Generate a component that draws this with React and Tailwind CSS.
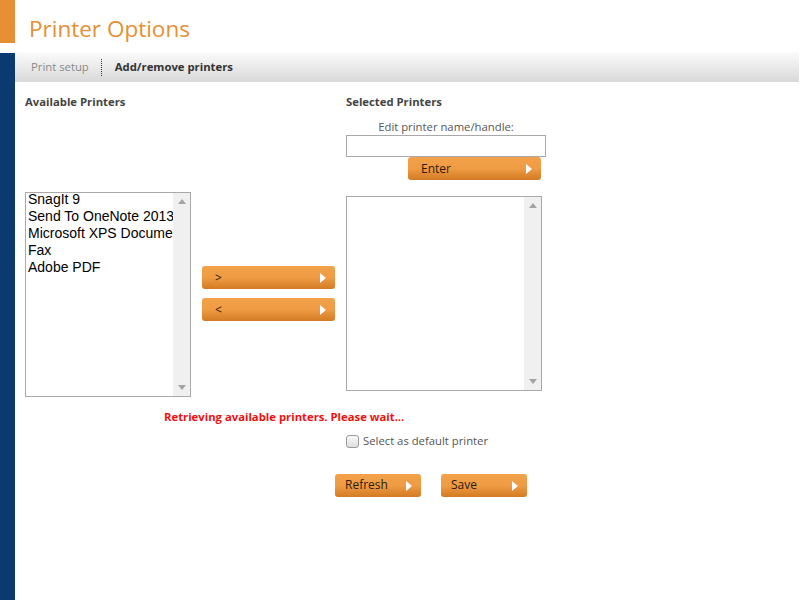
import React from 'react'

const font = { fontFamily: '"Open Sans", "Noto Sans", sans-serif' }

// orange gradient button with the little white arrow on the right
function OrangeButton({ label, className = '', small = false }) {
    return (
        <button
            className={`relative flex h-[23px] items-center rounded-[3px] bg-gradient-to-b from-[#f2a14a] via-[#ef9c44] to-[#d27b22] text-[12px] text-[#2a1a0a] ${small ? 'pl-[10px]' : 'pl-[13px]'} ${className}`}
        >
            <span>{label}</span>
            <svg className="absolute right-[9px] top-[7px]" width="6" height="10" viewBox="0 0 6 10">
                <path d="M0 0 L6 5 L0 10 Z" fill="#fff" />
            </svg>
        </button>
    )
}

function ListBox({ items = [], className = '' }) {
    return (
        <div className={`flex border border-[#a9a9a9] bg-white ${className}`}>
            <div className="-mt-[2px] flex-1 overflow-hidden whitespace-nowrap pl-[2px] text-[14px] leading-[17px] text-black" style={{ fontFamily: '"Liberation Sans", Arial, sans-serif' }}>
                {items.map((it) => (
                    <div key={it}>{it}</div>
                ))}
            </div>
            <div className="flex w-[17px] flex-col items-center justify-between bg-[#f0f0f0] py-[6px]">
                <svg width="8" height="5" viewBox="0 0 8 5">
                    <path d="M0 5 L4 0 L8 5 Z" fill="#a3a3a3" />
                </svg>
                <svg width="8" height="5" viewBox="0 0 8 5">
                    <path d="M0 0 L4 5 L8 0 Z" fill="#a3a3a3" />
                </svg>
            </div>
        </div>
    )
}

export default function App() {
    const printers = ['SnagIt 9', 'Send To OneNote 2013', 'Microsoft XPS Document Writer', 'Fax', 'Adobe PDF']

    return (
        <div className="flex h-[600px] w-[800px] bg-white" style={font}>
            <div className="flex w-[15px] flex-col">
                <div className="h-[43px] bg-[#e68f34]" />
                <div className="h-[10px]" />
                <div className="flex-1 bg-[#0a3a70]" />
            </div>

            <div className="flex flex-1 flex-col">
                <div className="h-[52px] pl-[14px] pt-[13px] text-[22.5px] leading-[32px] text-[#e68f34]">Printer Options</div>

                <div className="flex h-[30px] w-[784px] items-center bg-gradient-to-b from-[#fbfbfb] to-[#d9d9d9] text-[11.3px]">
                    <span className="pl-[16px] text-[#8a8a8a]">Print setup</span>
                    <span className="ml-[12px] h-[17px] border-l border-dotted border-[#333]" />
                    <span className="ml-[13px] font-bold text-[#333]">Add/remove printers</span>
                </div>

                <div className="flex pl-[10px] pt-[12px]">
                    <div className="flex w-[166px] flex-col">
                        <div className="text-[11.3px] font-bold leading-[16px] text-[#444]">Available Printers</div>
                        <ListBox items={printers} className="mt-[82px] h-[205px]" />
                    </div>

                    <div className="ml-[11px] flex w-[133px] flex-col gap-[9px] pt-[172px]">
                        <OrangeButton label=">" className="w-[133px]" />
                        <OrangeButton label="<" className="w-[133px]" />
                    </div>

                    <div className="ml-[11px] flex w-[200px] flex-col">
                        <div className="text-[11.3px] font-bold leading-[16px] text-[#444]">Selected Printers</div>
                        <div className="mt-[10px] text-center text-[11.3px] leading-[14px] text-[#555]">Edit printer name/handle:</div>
                        <input className="mt-[1px] h-[22px] w-[200px] border border-[#a9a9a9] bg-white outline-none" />
                        <OrangeButton label="Enter" className="ml-[62px] w-[133px]" />
                        <ListBox className="mt-[16px] h-[195px] w-[196px]" />
                    </div>
                </div>

                <div className="ml-[149px] mt-[12px] text-[11.3px] font-bold leading-[16px] text-[#f01010]">
                    Retrieving available printers. Please wait...
                </div>

                <label className="ml-[331px] mt-[8px] flex items-center gap-[4px] text-[11.3px] text-[#555]">
                    <span className="h-[13px] w-[13px] rounded-[3px] border border-[#9a9a9a] bg-gradient-to-b from-[#fafafa] to-[#dedede]" />
                    <span>Select as default printer</span>
                </label>

                <div className="ml-[320px] mt-[24px] flex gap-[20px]">
                    <OrangeButton label="Refresh" small className="w-[86px]" />
                    <OrangeButton label="Save" small className="w-[86px]" />
                </div>
            </div>
        </div>
    )
}
